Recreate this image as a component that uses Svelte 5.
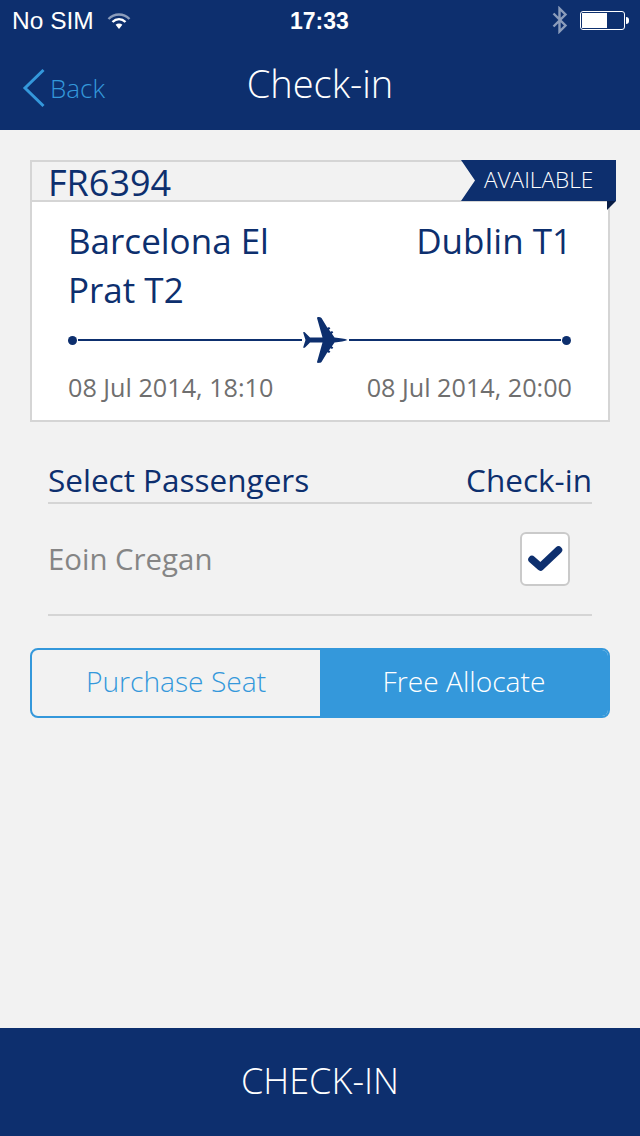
<script lang="ts">
	const passengers = [{ name: 'Eoin Cregan', checked: true }];
</script>

<div class="screen">
	<header class="top">
		<div class="status">
			<div class="status-left">
				<span>No SIM</span>
				<svg width="24" height="18" viewBox="0 0 24 18">
					<path d="M1.500 7C7.500 1 16.500 1 22.500 7" fill="none" stroke="#8c9dbb" stroke-width="2.400" />
					<path d="M5.500 10C9.300 6.200 14.700 6.200 18.500 10" fill="none" stroke="#fff" stroke-width="2.400" />
					<path d="M8.600 12.800C10.600 11 13.400 11 15.400 12.800L12 17Z" fill="#fff" />
				</svg>
			</div>
			<span class="clock">17:33</span>
			<div class="status-right">
				<svg width="18" height="28" viewBox="0 0 18 28">
					<path d="M2.500 7.500L14.500 19.500L8.500 25.500V2.500L14.500 8.500L2.500 20.500" fill="none" stroke="#8c9dbb" stroke-width="2.400" />
				</svg>
				<div class="battery"><div class="charge"></div></div>
				<div class="nub"></div>
			</div>
		</div>
		<nav class="nav">
			<div class="back">
				<svg width="24" height="40" viewBox="0 0 24 40">
					<path d="M21.500 2L3 20L21.500 38" fill="none" stroke="#3498db" stroke-width="3" />
				</svg>
				<span>Back</span>
			</div>
			<h1>Check-in</h1>
		</nav>
	</header>

	<main class="content">
		<section class="card">
			<div class="card-head">
				<span class="flight">FR6394</span>
				<span class="ribbon">AVAILABLE</span>
			</div>
			<div class="card-body">
				<div class="places">
					<div class="place">Barcelona El Prat T2</div>
					<div class="place right">Dublin T1</div>
				</div>
				<div class="route">
					<i class="dot"></i>
					<i class="line first"></i>
					<svg class="plane" width="46" height="48" viewBox="0 0 46 48">
						<path d="M45.500 24C43 22.800 38 22 32.500 21.600L29.800 17.500L31.300 16.800L30.200 15L28.400 15.700L27 13.500L28.400 12.800L27.200 11L25.400 11.700L19.500 2C18.200 .8 15 .8 15 2L20.500 21.600H8L3 16.500C2 15.800 1 16 1.300 17L3.500 24L1.300 31C1 32 2 32.200 3 31.500L8 26.400H20.500L15 46C15 47.200 18.200 47.200 19.500 46L25.400 36.300L27.200 37L28.400 35.200L27 34.500L28.400 32.300L30.200 33L31.300 31.200L29.800 30.500L32.500 26.400C38 26 43 25.200 45.500 24Z" fill="#0d2f6e" />
					</svg>
					<i class="line"></i>
					<i class="dot"></i>
				</div>
				<div class="times">
					<span>08 Jul 2014, 18:10</span>
					<span>08 Jul 2014, 20:00</span>
				</div>
			</div>
		</section>

		<section class="passengers">
			<div class="pass-head">
				<span>Select Passengers</span>
				<span>Check-in</span>
			</div>
			{#each passengers as p}
				<div class="pass-row">
					<span>{p.name}</span>
					<div class="checkbox">
						{#if p.checked}
							<svg width="36" height="28" viewBox="0 0 36 28">
								<path d="M5 14.500L13.500 22L31.500 5" fill="none" stroke="#0d2f6e" stroke-width="7.500" stroke-linejoin="round" stroke-linecap="round" />
							</svg>
						{/if}
					</div>
				</div>
			{/each}
		</section>

		<div class="segment">
			<div class="seg">Purchase Seat</div>
			<div class="seg active">Free Allocate</div>
		</div>
	</main>

	<footer class="cta">CHECK-IN</footer>
</div>

<style>
	:global(body) {
		margin: 0;
		background: #f2f2f2;
	}
	.screen {
		display: flex;
		flex-direction: column;
		min-height: 1136px;
		background: #f2f2f2;
		color: #0d2f6e;
		font-family: 'Open Sans', sans-serif;
	}
	.top {
		background: #0d2f6e;
		height: 130px;
	}
	.status {
		display: flex;
		justify-content: space-between;
		align-items: center;
		position: relative;
		box-sizing: border-box;
		height: 40px;
		padding: 2px 11px 0 12px;
		color: #fff;
		font-family: 'Liberation Sans', sans-serif;
		font-size: 24.500px;
	}
	.status-left {
		display: flex;
		align-items: center;
		gap: 13px;
	}
	.clock {
		position: absolute;
		left: 290px;
		font-size: 23px;
		font-weight: 700;
	}
	.status-right {
		display: flex;
		align-items: center;
		margin-top: -2px;
	}
	.battery {
		box-sizing: border-box;
		width: 45px;
		height: 19px;
		margin-left: 11px;
		padding: 1px;
		border: 1.500px solid #fff;
		border-radius: 3px;
	}
	.charge {
		width: 25px;
		height: 100%;
		background: #fff;
	}
	.nub {
		width: 3px;
		height: 7px;
		margin-left: 1px;
		background: #fff;
		border-radius: 0 3px 3px 0;
	}
	.nav {
		position: relative;
		display: flex;
		align-items: center;
		justify-content: center;
		height: 90px;
	}
	.back {
		position: absolute;
		left: 22px;
		top: 28px;
		display: flex;
		align-items: center;
		gap: 4px;
		color: #3498db;
		font-size: 26px;
		font-weight: 300;
	}
	h1 {
		margin: 0 0 4px;
		color: #fff;
		font-size: 38px;
		font-weight: 300;
	}
	.content {
		flex: 1;
		padding: 30px 30px 0;
	}
	.card {
		box-sizing: border-box;
		height: 262px;
		border: 2px solid #d5d5d5;
		position: relative;
		background: #f2f2f2;
	}
	.card-head {
		height: 38px;
		padding-left: 16px;
		position: relative;
	}
	.flight {
		font-size: 36px;
		line-height: 42px;
		color: #0d2f6e;
	}
	.ribbon {
		position: absolute;
		top: -2px;
		right: -8px;
		box-sizing: border-box;
		width: 155px;
		height: 41px;
		padding-left: 23px;
		background: #0d2f6e;
		clip-path: polygon(0 0, 100% 0, 100% 100%, 0 100%, 14px 50%);
		color: #fff;
		font-size: 22.600px;
		font-weight: 300;
		line-height: 40px;
	}
	.card-head::after {
		content: '';
		position: absolute;
		top: 39px;
		right: -8px;
		width: 0;
		height: 0;
		border-top: 9px solid #081c45;
		border-right: 9px solid transparent;
	}
	.card-body {
		box-sizing: border-box;
		height: 220px;
		padding: 14px 36px 0;
		background: #fff;
		border-top: 2px solid #d5d5d5;
	}
	.places {
		display: flex;
		justify-content: space-between;
		height: 98px;
		font-size: 35px;
		line-height: 49px;
	}
	.place {
		width: 240px;
	}
	.place.right {
		text-align: right;
		width: 200px;
	}
	.route {
		display: flex;
		align-items: center;
		height: 48px;
		margin-top: 2px;
		padding-right: 1px;
	}
	.dot {
		flex: none;
		width: 9px;
		height: 9px;
		border-radius: 50%;
		background: #0d2f6e;
	}
	.line {
		flex: 1;
		height: 2px;
		margin: 0 1px;
		background: #0d2f6e;
	}
	.line.first {
		flex: none;
		width: 224px;
		margin: 0 0 0 1px;
	}
	.plane {
		flex: none;
	}
	.times {
		display: flex;
		justify-content: space-between;
		margin-top: 7px;
		color: #6f6f6f;
		font-size: 25.200px;
		line-height: 32px;
	}
	.passengers {
		margin: 36px 18px 0;
	}
	.pass-head {
		display: flex;
		justify-content: space-between;
		box-sizing: border-box;
		height: 46px;
		border-bottom: 2px solid #d5d5d5;
		font-size: 31.500px;
		line-height: 44px;
	}
	.pass-row {
		display: flex;
		justify-content: space-between;
		align-items: center;
		box-sizing: border-box;
		height: 112px;
		padding-right: 22px;
		border-bottom: 2px solid #d5d5d5;
		color: #858585;
		font-size: 29.400px;
	}
	.checkbox {
		display: flex;
		align-items: center;
		justify-content: center;
		box-sizing: border-box;
		width: 50px;
		height: 54px;
		background: #fff;
		border: 2px solid #cacaca;
		border-radius: 6px;
	}
	.segment {
		display: flex;
		box-sizing: border-box;
		height: 70px;
		margin-top: 32px;
		border: 2px solid #3498db;
		border-radius: 8px;
		overflow: hidden;
		color: #3498db;
		font-size: 28.200px;
		font-weight: 300;
	}
	.seg {
		flex: 1;
		display: flex;
		align-items: center;
		justify-content: center;
		padding-bottom: 4px;
	}
	.seg.active {
		background: #3498db;
		color: #fff;
	}
	.cta {
		display: flex;
		align-items: center;
		justify-content: center;
		box-sizing: border-box;
		height: 108px;
		padding-bottom: 4px;
		background: #0d2f6e;
		color: #fff;
		font-size: 36px;
		font-weight: 300;
	}
</style>
